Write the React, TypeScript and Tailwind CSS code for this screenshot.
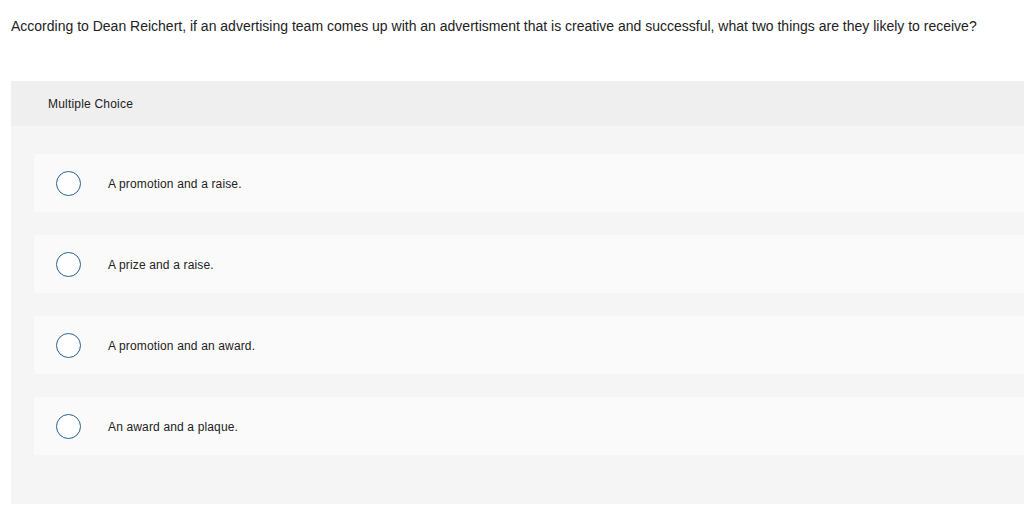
const OPTIONS = [
  "A promotion and a raise.",
  "A prize and a raise.",
  "A promotion and an award.",
  "An award and a plaque.",
];

export default function App() {
  return (
    <div className="min-h-screen bg-white text-[#222] font-['Liberation_Sans',Arial,sans-serif]">
      <p className="pl-[11px] pt-[18px] text-[14px] leading-[16px]">
        According to Dean Reichert, if an advertising team comes up with an advertisment that is creative and successful, what two things are they likely to receive?
      </p>

      <section className="ml-[11px] mt-[47px]">
        <div className="flex h-[45px] items-center bg-[#efefef] pl-[37px] text-[12px] tracking-[0.2px]">
          Multiple Choice
        </div>
        <div className="flex flex-col gap-[23px] bg-[#f5f5f5] pb-[49px] pl-[23px] pt-[28px]">
          {OPTIONS.map((opt) => (
            <label key={opt} className="flex h-[58px] items-center bg-[#fafafa]">
              <span className="ml-[22px] h-[25px] w-[25px] shrink-0 rounded-full border-[1.5px] border-[#2b5f91] bg-white" />
              <span className="ml-[27px] pt-px text-[12px] tracking-[0.15px]">{opt}</span>
            </label>
          ))}
        </div>
      </section>
    </div>
  );
}
